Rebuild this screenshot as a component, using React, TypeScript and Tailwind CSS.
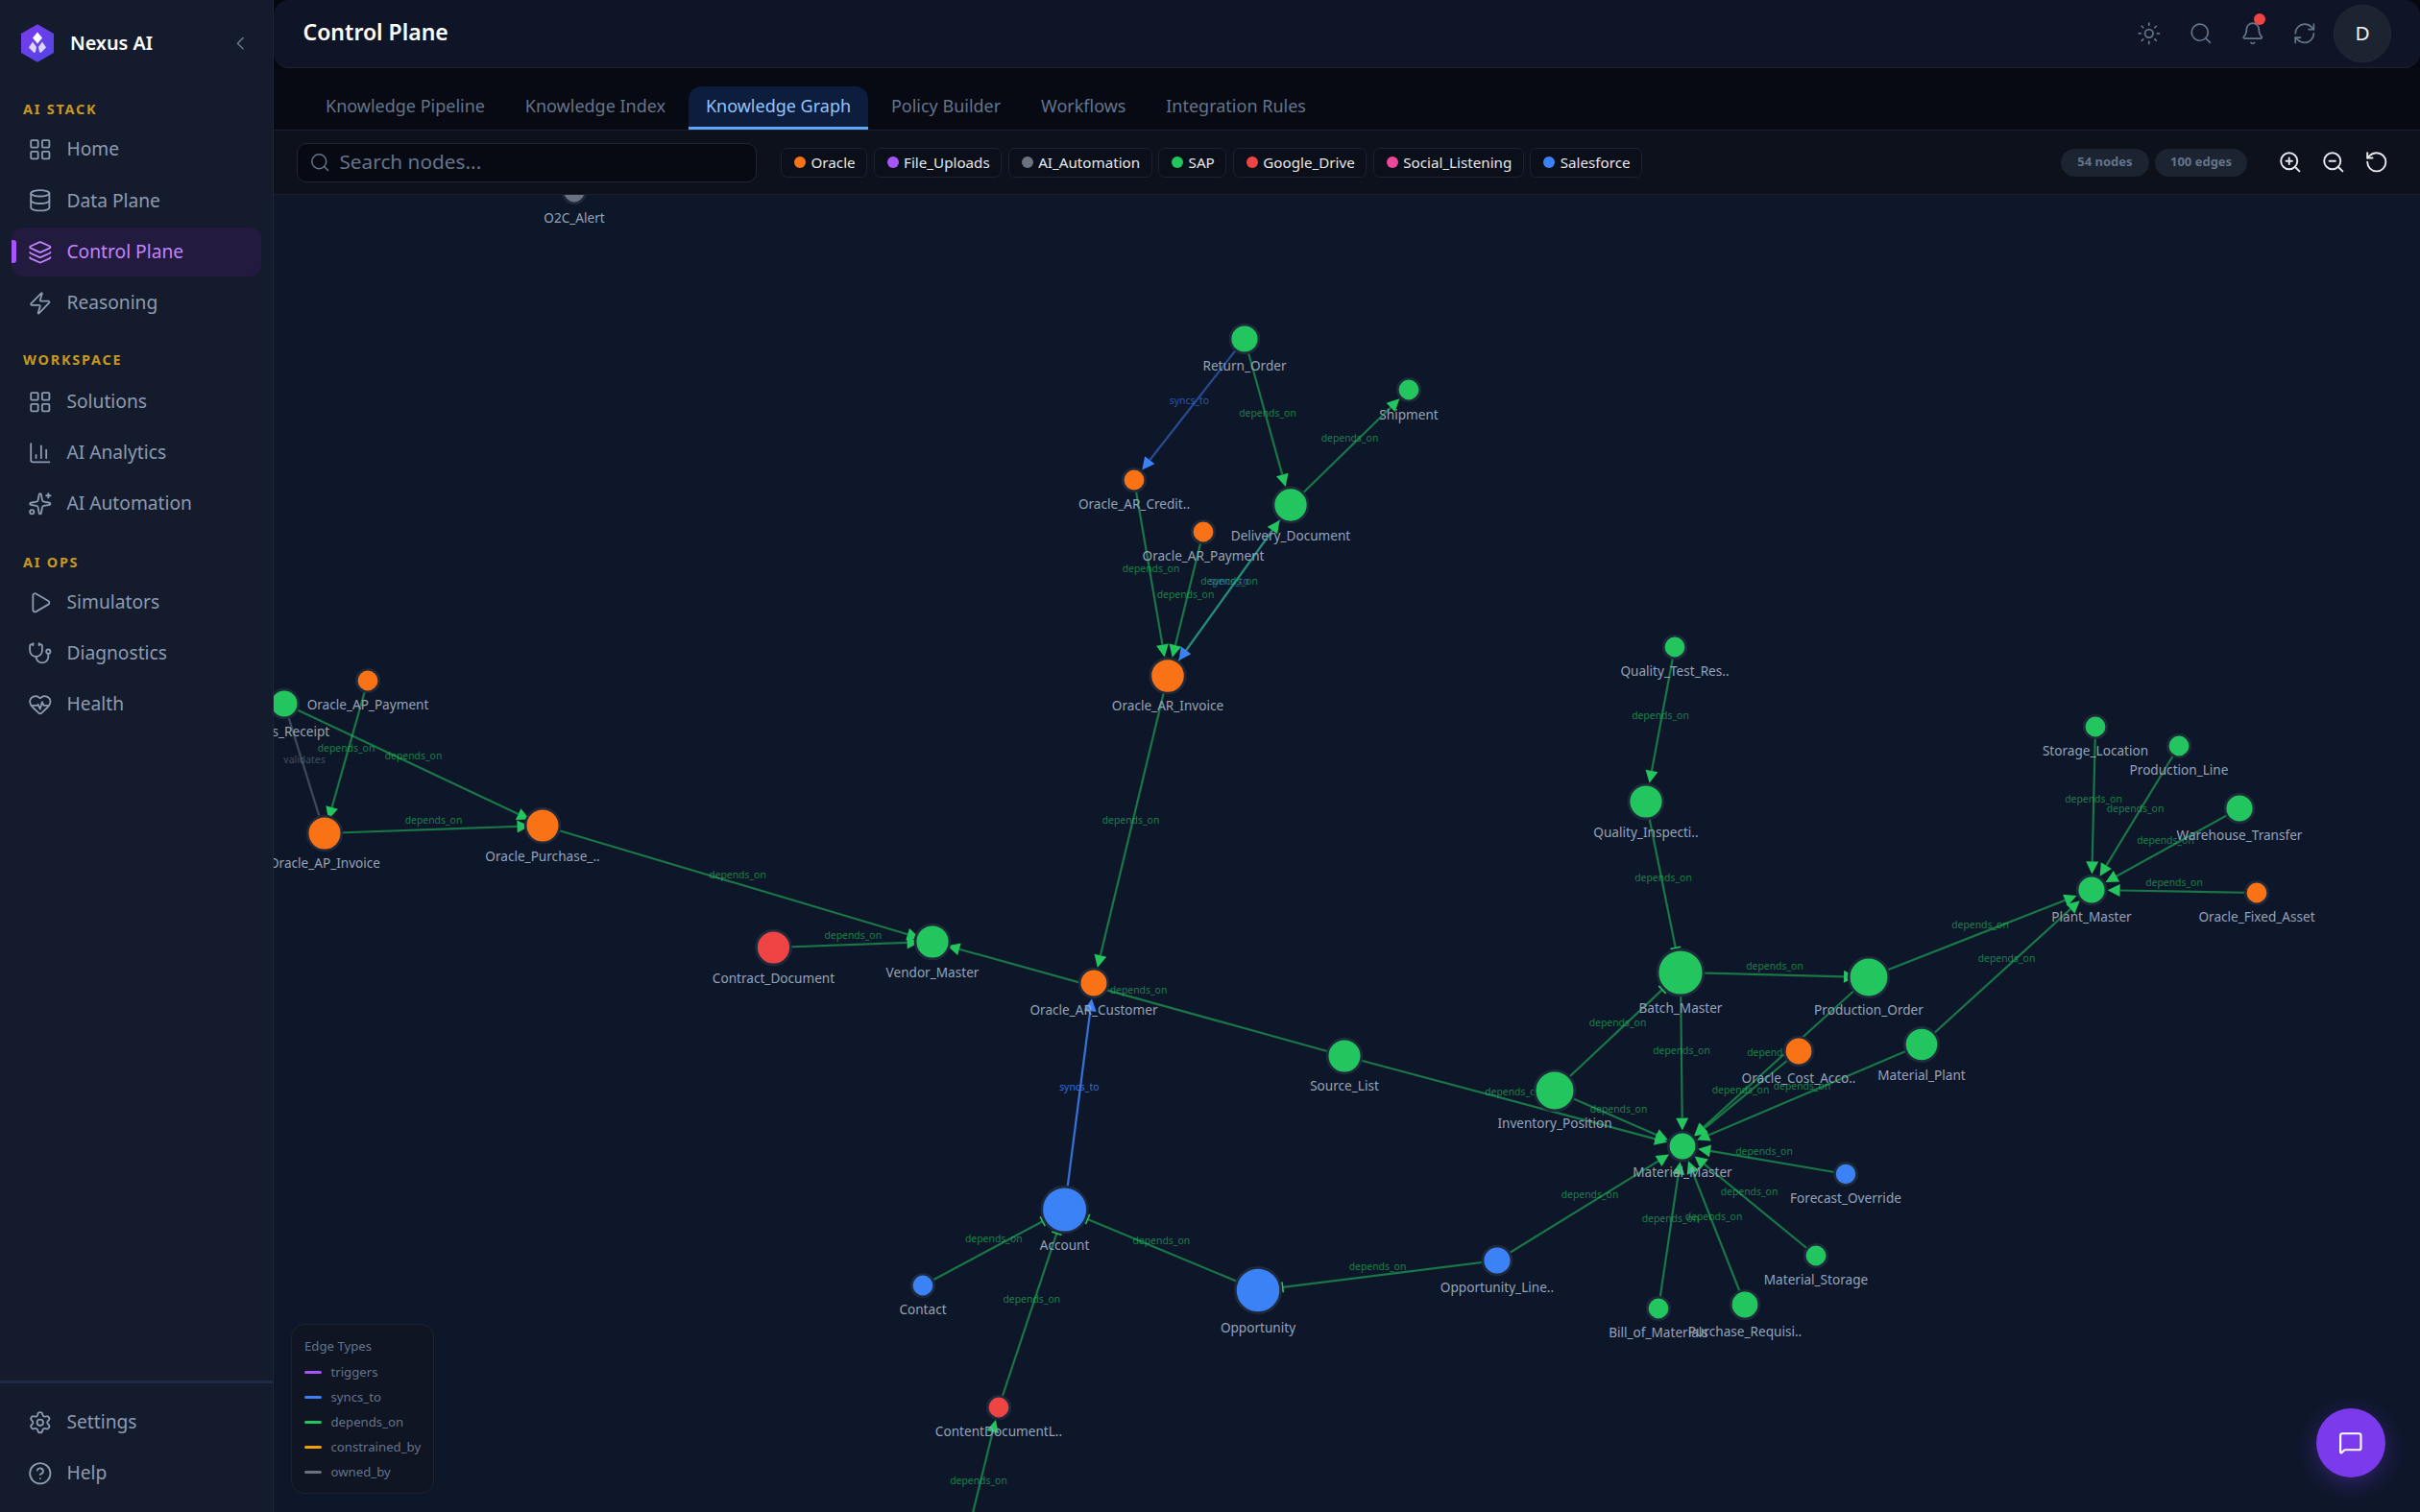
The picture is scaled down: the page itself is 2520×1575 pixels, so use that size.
import React from "react";
import {
  LayoutGrid, Database, Layers, Zap, ChartColumn, Sparkles, Play, Stethoscope, HeartPulse,
  Settings, CircleHelp, ChevronLeft, Sun, Search, Bell, RefreshCw, ZoomIn, ZoomOut, RotateCcw, MessageSquare,
} from "lucide-react";

const G = "#22c55e", O = "#f97316", B = "#3b82f6", R = "#ef4444", Y = "#6b7280";

type N = { x: number; y: number; r: number; c: string; label: string; ly: number };
const nodes: Record<string, N> = {
  o2c: { x: 598, y: 200, r: 10.4, c: Y, label: "O2C_Alert", ly: 227 },
  ret: { x: 1296, y: 353, r: 13.6, c: G, label: "Return_Order", ly: 381 },
  ship: { x: 1467, y: 406, r: 10.4, c: G, label: "Shipment", ly: 432 },
  cred: { x: 1181, y: 500, r: 10.4, c: O, label: "Oracle_AR_Credit..", ly: 525 },
  arp: { x: 1253, y: 554, r: 10.4, c: O, label: "Oracle_AR_Payment", ly: 579 },
  del: { x: 1344, y: 526, r: 16.7, c: G, label: "Delivery_Document", ly: 558 },
  inv: { x: 1216, y: 704, r: 16.8, c: O, label: "Oracle_AR_Invoice", ly: 735 },
  app: { x: 383, y: 709, r: 10.4, c: O, label: "Oracle_AP_Payment", ly: 734 },
  goods: { x: 296, y: 733, r: 13.5, c: G, label: "Goods_Receipt", ly: 762 },
  api: { x: 338, y: 868, r: 16.5, c: O, label: "Oracle_AP_Invoice", ly: 899 },
  pur: { x: 565, y: 860, r: 16.5, c: O, label: "Oracle_Purchase_..", ly: 892 },
  con: { x: 805.5, y: 987, r: 16.6, c: R, label: "Contract_Document", ly: 1019 },
  ven: { x: 971, y: 981, r: 16.6, c: G, label: "Vendor_Master", ly: 1013 },
  cus: { x: 1139, y: 1024, r: 13.5, c: O, label: "Oracle_AR_Customer", ly: 1052 },
  src: { x: 1400, y: 1100, r: 16.5, c: G, label: "Source_List", ly: 1131 },
  acc: { x: 1108.6, y: 1260, r: 22.5, c: B, label: "Account", ly: 1297 },
  ctc: { x: 961, y: 1339, r: 10.4, c: B, label: "Contact", ly: 1364 },
  opp: { x: 1310, y: 1344, r: 22.3, c: B, label: "Opportunity", ly: 1382.5 },
  cdl: { x: 1040, y: 1466, r: 10.4, c: R, label: "ContentDocumentL..", ly: 1491 },
  opl: { x: 1559, y: 1313, r: 13.6, c: B, label: "Opportunity_Line..", ly: 1341 },
  bat: { x: 1750, y: 1013, r: 22.6, c: G, label: "Batch_Master", ly: 1050 },
  po: { x: 1946, y: 1018, r: 19.4, c: G, label: "Production_Order", ly: 1052 },
  oc: { x: 1873, y: 1095, r: 13.4, c: O, label: "Oracle_Cost_Acco..", ly: 1123 },
  mp: { x: 2001, y: 1088, r: 16.3, c: G, label: "Material_Plant", ly: 1120 },
  ip: { x: 1619, y: 1136, r: 19.5, c: G, label: "Inventory_Position", ly: 1170 },
  mm: { x: 1752, y: 1194, r: 13.4, c: G, label: "Material_Master", ly: 1221 },
  fo: { x: 1922, y: 1223, r: 10.2, c: B, label: "Forecast_Override", ly: 1248 },
  ms: { x: 1891, y: 1308, r: 10.4, c: G, label: "Material_Storage", ly: 1333 },
  bom: { x: 1727, y: 1363, r: 10.4, c: G, label: "Bill_of_Materials", ly: 1388 },
  prq: { x: 1817, y: 1359, r: 13.4, c: G, label: "Purchase_Requisi..", ly: 1387 },
  sl: { x: 2182, y: 757, r: 10.4, c: G, label: "Storage_Location", ly: 782 },
  pl: { x: 2269, y: 777, r: 10.4, c: G, label: "Production_Line", ly: 802 },
  wt: { x: 2332, y: 842, r: 13.6, c: G, label: "Warehouse_Transfer", ly: 870 },
  pm: { x: 2178, y: 927, r: 13.6, c: G, label: "Plant_Master", ly: 955 },
  ofa: { x: 2350, y: 930, r: 10.4, c: O, label: "Oracle_Fixed_Asset", ly: 955 },
  qt: { x: 1744, y: 674, r: 10.4, c: G, label: "Quality_Test_Res..", ly: 699 },
  qi: { x: 1714, y: 835, r: 16.6, c: G, label: "Quality_Inspecti..", ly: 867 },
  off: { x: 998, y: 1637, r: 10.4, c: G, label: "", ly: 1665 },
};

type E = { a: string; b: string; kind?: "dep" | "sync" | "val"; end?: "tri" | "tee" | "none"; tip?: number; op?: number };
const edges: E[] = [
  { a: "ret", b: "cred", kind: "sync", op: 0.5 },
  { a: "ret", b: "del" },
  { a: "del", b: "ship" },
  { a: "cred", b: "inv" },
  { a: "arp", b: "inv" },
  { a: "del", b: "inv", kind: "sync", op: 0.5 },
  { a: "inv", b: "del" },
  { a: "inv", b: "cus" },
  { a: "goods", b: "pur", tip: 15 },
  { a: "app", b: "api", tip: 15 },
  { a: "goods", b: "api", kind: "val", end: "none" },
  { a: "api", b: "pur", tip: 13.5 },
  { a: "pur", b: "ven", tip: 14 },
  { a: "con", b: "ven", tip: 13.5 },
  { a: "src", b: "ven", tip: 16 },
  { a: "acc", b: "cus", kind: "sync", op: 0.85 },
  { a: "ctc", b: "acc", end: "tee" },
  { a: "opp", b: "acc", end: "tee" },
  { a: "cdl", b: "acc", end: "tee" },
  { a: "opl", b: "opp", end: "tee" },
  { a: "off", b: "cdl" },
  { a: "qt", b: "qi" },
  { a: "qi", b: "bat", end: "tee" },
  { a: "ip", b: "bat", end: "tee" },
  { a: "bat", b: "po", tip: 13 },
  { a: "bat", b: "mm" },
  { a: "ip", b: "mm" },
  { a: "src", b: "mm" },
  { a: "po", b: "mm" },
  { a: "oc", b: "mm" },
  { a: "mp", b: "mm" },
  { a: "fo", b: "mm" },
  { a: "ms", b: "mm" },
  { a: "bom", b: "mm" },
  { a: "prq", b: "mm" },
  { a: "opl", b: "mm" },
  { a: "sl", b: "pm" },
  { a: "pl", b: "pm" },
  { a: "wt", b: "pm" },
  { a: "ofa", b: "pm" },
  { a: "po", b: "pm" },
  { a: "mp", b: "pm" },
];

const kinds = {
  dep: { color: G, label: "depends_on" },
  sync: { color: B, label: "syncs_to" },
  val: { color: Y, label: "validates" },
};

function geom(e: E) {
  const A = nodes[e.a], T = nodes[e.b];
  const dx = A.x - T.x, dy = A.y - T.y;
  const d = Math.hypot(dx, dy);
  const ux = dx / d, uy = dy / d;
  const end = e.end ?? "tri";
  const tipD = e.tip ?? (end === "tee" ? T.r + 3.5 : T.r + 3);
  const tx = T.x + ux * tipD, ty = T.y + uy * tipD;
  const bx = tx + ux * 13, by = ty + uy * 13;
  return { A, T, ux, uy, end, tx, ty, bx, by };
}

function Graph() {
  return (
    <svg className="absolute inset-0 h-full w-full" viewBox="285 203 2235 1372" preserveAspectRatio="xMinYMin slice">
      <g>
        {edges.map((e, i) => {
          const g = geom(e);
          const k = kinds[e.kind ?? "dep"];
          return (
            <line
              key={i}
              x1={g.A.x}
              y1={g.A.y}
              x2={g.end === "tri" ? g.bx : g.tx}
              y2={g.end === "tri" ? g.by : g.ty}
              stroke={k.color}
              strokeWidth={2.2}
              strokeOpacity={e.op ?? 0.55}
            />
          );
        })}
      </g>
      <g>
        {edges.map((e, i) => {
          const g = geom(e);
          const k = kinds[e.kind ?? "dep"];
          const mx = (g.A.x + g.T.x) / 2, my = (g.A.y + g.T.y) / 2 - 10;
          return (
            <text
              key={i}
              x={mx}
              y={my}
              textAnchor="middle"
              dominantBaseline="central"
              fontSize={10.4}
              fill={k.color}
              fillOpacity={e.kind === "val" ? 0.6 : e.op && e.op > 0.6 ? 0.85 : 0.62}
            >
              {k.label}
            </text>
          );
        })}
      </g>
      <g>
        {edges.map((e, i) => {
          const g = geom(e);
          const k = kinds[e.kind ?? "dep"];
          if (g.end === "none") return null;
          if (g.end === "tee") {
            const px = -g.uy, py = g.ux;
            return (
              <line
                key={i}
                x1={g.tx + px * 5.5}
                y1={g.ty + py * 5.5}
                x2={g.tx - px * 5.5}
                y2={g.ty - py * 5.5}
                stroke={k.color}
                strokeWidth={1.6}
              />
            );
          }
          const px = -g.uy * 6.5, py = g.ux * 6.5;
          return (
            <polygon
              key={i}
              points={`${g.tx},${g.ty} ${g.bx + px},${g.by + py} ${g.bx - px},${g.by - py}`}
              fill={k.color}
            />
          );
        })}
      </g>
      <g>
        {Object.entries(nodes).map(([id, n]) => (
          <circle key={id} cx={n.x} cy={n.y} r={n.r + 1.35} fill={n.c} stroke="#1e293b" strokeWidth={2.7} />
        ))}
      </g>
      <g>
        {Object.entries(nodes).map(([id, n]) => (
          <text key={id} x={n.x} y={n.ly - 0.5} textAnchor="middle" dominantBaseline="central" fontSize={13.6} fill="#94a3b8">
            {n.label}
          </text>
        ))}
      </g>
    </svg>
  );
}

function Logo() {
  return (
    <svg width="34" height="40" viewBox="0 0 34 40" className="shrink-0">
      <defs>
        <linearGradient id="lg" x1="0" y1="0" x2="1" y2="1">
          <stop offset="0" stopColor="#7c3aed" />
          <stop offset="1" stopColor="#4f46e5" />
        </linearGradient>
      </defs>
      <polygon points="17,0.3 34,10 34,30 17,39.7 0,30 0,10" fill="url(#lg)" />
      <polygon points="17,8.5 22,14.5 17,20.5 12,14.5" fill="#ffffff" />
      <polygon points="12,18.5 16,24 15,29 13.5,30 8,24.5" fill="#ddd6fe" />
      <polygon points="22,18.5 18,24 19,29 20.5,30 26,24.5" fill="#ddd6fe" />
    </svg>
  );
}

type IconT = React.ComponentType<{ size?: number; strokeWidth?: number; className?: string }>;

function NavItem({ icon: Icon, label, active }: { icon: IconT; label: string; active?: boolean }) {
  return (
    <div
      className={
        active
          ? "relative mx-[12px] flex h-[51px] items-center gap-[14.7px] rounded-[12px] bg-[#231b3f] pl-[17.2px] text-[#c084fc]"
          : "relative mx-[12px] flex h-[51px] items-center gap-[14.7px] rounded-[12px] pl-[17.2px] text-[#8c9bb1]"
      }
    >
      {active ? <span className="absolute left-0 top-[13px] h-[24px] w-[4.5px] rounded-r-[3px] bg-[#a855f7]" /> : null}
      <Icon size={25.6} strokeWidth={1.7} className="shrink-0" />
      <span className="pb-[2px] text-[19.2px] leading-none">{label}</span>
    </div>
  );
}

function SectionLabel({ children, className }: { children: React.ReactNode; className: string }) {
  return (
    <div className={"h-[20px] pl-[24px] text-[14.4px] font-bold leading-[20px] tracking-[1.8px] text-[#c9981f] " + className}>
      {children}
    </div>
  );
}

const chips = [
  ["Oracle", O],
  ["File_Uploads", "#a855f7"],
  ["AI_Automation", Y],
  ["SAP", G],
  ["Google_Drive", R],
  ["Social_Listening", "#ec4899"],
  ["Salesforce", B],
];

const legend = [
  ["triggers", "#a855f7"],
  ["syncs_to", B],
  ["depends_on", G],
  ["constrained_by", "#f59e0b"],
  ["owned_by", Y],
];

const tabs = ["Knowledge Pipeline", "Knowledge Index", "Knowledge Graph", "Policy Builder", "Workflows", "Integration Rules"];

export default function App() {
  return (
    <div className="flex h-screen w-screen overflow-hidden bg-[#05080f] font-['Noto_Sans',sans-serif]">
      <aside className="flex h-full w-[285px] shrink-0 flex-col border-r border-[#1e2638] bg-[#141b2d]">
        <div className="flex h-[103.5px] items-start pl-[22px] pr-[23px] pt-[25px]">
          <Logo />
          <span className="ml-[17px] mt-[8px] text-[19.8px] font-semibold leading-[24px] text-white">Nexus AI</span>
          <ChevronLeft size={22.4} strokeWidth={1.7} className="ml-auto mt-[9px] text-[#64748b]" />
        </div>
        <SectionLabel className="mb-[7px]">AI STACK</SectionLabel>
        <div className="flex flex-col gap-[2.2px]">
          <NavItem icon={LayoutGrid} label="Home" />
          <NavItem icon={Database} label="Data Plane" />
          <NavItem icon={Layers} label="Control Plane" active />
          <NavItem icon={Zap} label="Reasoning" />
        </div>
        <SectionLabel className="mb-[8px] mt-[24px]">WORKSPACE</SectionLabel>
        <div className="flex flex-col gap-[2.2px]">
          <NavItem icon={LayoutGrid} label="Solutions" />
          <NavItem icon={ChartColumn} label="AI Analytics" />
          <NavItem icon={Sparkles} label="AI Automation" />
        </div>
        <SectionLabel className="mb-[6px] mt-[25.6px]">AI OPS</SectionLabel>
        <div className="flex flex-col gap-[2.2px]">
          <NavItem icon={Play} label="Simulators" />
          <NavItem icon={Stethoscope} label="Diagnostics" />
          <NavItem icon={HeartPulse} label="Health" />
        </div>
        <div className="mt-auto flex flex-col gap-[2.2px] border-t-[3px] border-[#1e2a47] pb-[14.5px] pt-[15px]">
          <NavItem icon={Settings} label="Settings" />
          <NavItem icon={CircleHelp} label="Help" />
        </div>
      </aside>

      <main className="flex min-w-0 flex-1 flex-col">
        <header className="flex h-[71px] shrink-0 items-center rounded-[16px] border-b border-[#1e2433] bg-[#0f1526] pl-[30.5px] pr-[30px]">
          <h1 className="pb-[3px] text-[23px] font-semibold leading-none text-white">Control Plane</h1>
          <div className="ml-auto flex items-center gap-[2.8px] text-[#64748b]">
            <button className="flex h-[51px] w-[51.2px] items-center justify-center"><Sun size={25.6} strokeWidth={1.6} /></button>
            <button className="flex h-[51px] w-[51.2px] items-center justify-center"><Search size={25.6} strokeWidth={1.6} /></button>
            <button className="relative flex h-[51px] w-[51.2px] items-center justify-center">
              <Bell size={25.6} strokeWidth={1.6} />
              <span className="absolute right-[13px] top-[4px] h-[12px] w-[12px] rounded-full bg-[#ef4444]" />
            </button>
            <button className="flex h-[51px] w-[51.2px] items-center justify-center"><RefreshCw size={25.6} strokeWidth={1.6} /></button>
            <div className="ml-[1.6px] flex h-[60px] w-[60px] items-center justify-center rounded-full border border-[#232b3a] bg-[#1c2331] text-[20.8px] text-[#f1f5f9]">D</div>
          </div>
        </header>

        <nav className="flex h-[65px] shrink-0 items-end gap-[5px] border-b border-[#1a2030] bg-[#070a13] pl-[35.6px]">
          {tabs.map((t) => (
            <div
              key={t}
              className={
                t === "Knowledge Graph"
                  ? "flex h-[45px] items-center rounded-t-[13px] border-b-[3px] border-[#60a5fa] bg-[#0c1d3d] px-[18.4px] pb-[2px] text-[18px] text-[#93c5fd]"
                  : "flex h-[45px] items-center border-b-[3px] border-transparent px-[18.4px] pb-[2px] text-[18px] text-[#64748b]"
              }
            >
              {t}
            </div>
          ))}
        </nav>

        <div className="flex h-[67px] shrink-0 items-center border-b border-[#1a2030] bg-[#0d111c] pl-[24px] pr-[26px]">
          <div className="flex h-[41px] w-[479px] shrink-0 items-center gap-[9px] rounded-[10px] border border-[#1f2735] bg-[#070a13] pl-[12px] text-[20.8px] text-[#64748b]">
            <Search size={22.4} strokeWidth={1.6} />
            <span>Search nodes...</span>
          </div>
          <div className="ml-[25px] flex items-center gap-[6.4px]">
            {chips.map(([name, c]) => (
              <div key={name} className="flex h-[31px] items-center gap-[5.5px] rounded-[7px] border border-[#1c2230] bg-[#0b0f19] pl-[13px] pr-[11.5px] text-[15.2px] text-[#e5e7eb]">
                <span className="h-[12px] w-[12px] rounded-full" style={{ backgroundColor: c }} />
                {name}
              </div>
            ))}
          </div>
          <div className="ml-auto flex items-center gap-[6.4px]">
            <span className="flex h-[29px] items-center rounded-full bg-[#1c2331] px-[17px] text-[13px] font-bold text-[#64748b]">54 nodes</span>
            <span className="flex h-[29px] items-center rounded-full bg-[#1c2331] px-[16px] text-[13px] font-bold text-[#64748b]">100 edges</span>
          </div>
          <div className="ml-[25.5px] flex items-center gap-[6.6px] text-[#e5e7eb]">
            <button className="flex w-[38.4px] justify-center"><ZoomIn size={25.6} strokeWidth={1.8} /></button>
            <button className="flex w-[38.4px] justify-center"><ZoomOut size={25.6} strokeWidth={1.8} /></button>
            <button className="flex w-[38.4px] justify-center"><RotateCcw size={25.6} strokeWidth={1.8} /></button>
          </div>
        </div>

        <section className="relative min-h-0 flex-1 overflow-hidden bg-[#0e172a]">
          <Graph />
          <div className="absolute bottom-[19px] left-[18px] h-[177px] w-[149px] rounded-[14px] border border-[#1c2433] bg-[#0f1523] pl-[13px] pt-[12px] text-[13.2px] leading-[20px] text-[#64748b]">
            <div className="mb-[7px]">Edge Types</div>
            <div className="flex flex-col gap-[6px]">
              {legend.map(([name, c]) => (
                <div key={name} className="flex items-center gap-[9.5px]">
                  <span className="h-[3px] w-[18px] rounded-full" style={{ backgroundColor: c }} />
                  <span>{name}</span>
                </div>
              ))}
            </div>
          </div>
          <button className="absolute bottom-[36px] right-[36px] flex h-[72px] w-[72px] items-center justify-center rounded-full bg-[#7c3aed] text-white shadow-[0_6px_24px_rgba(124,58,237,0.35)]">
            <MessageSquare size={25.6} strokeWidth={2} />
          </button>
        </section>
      </main>
    </div>
  );
}
